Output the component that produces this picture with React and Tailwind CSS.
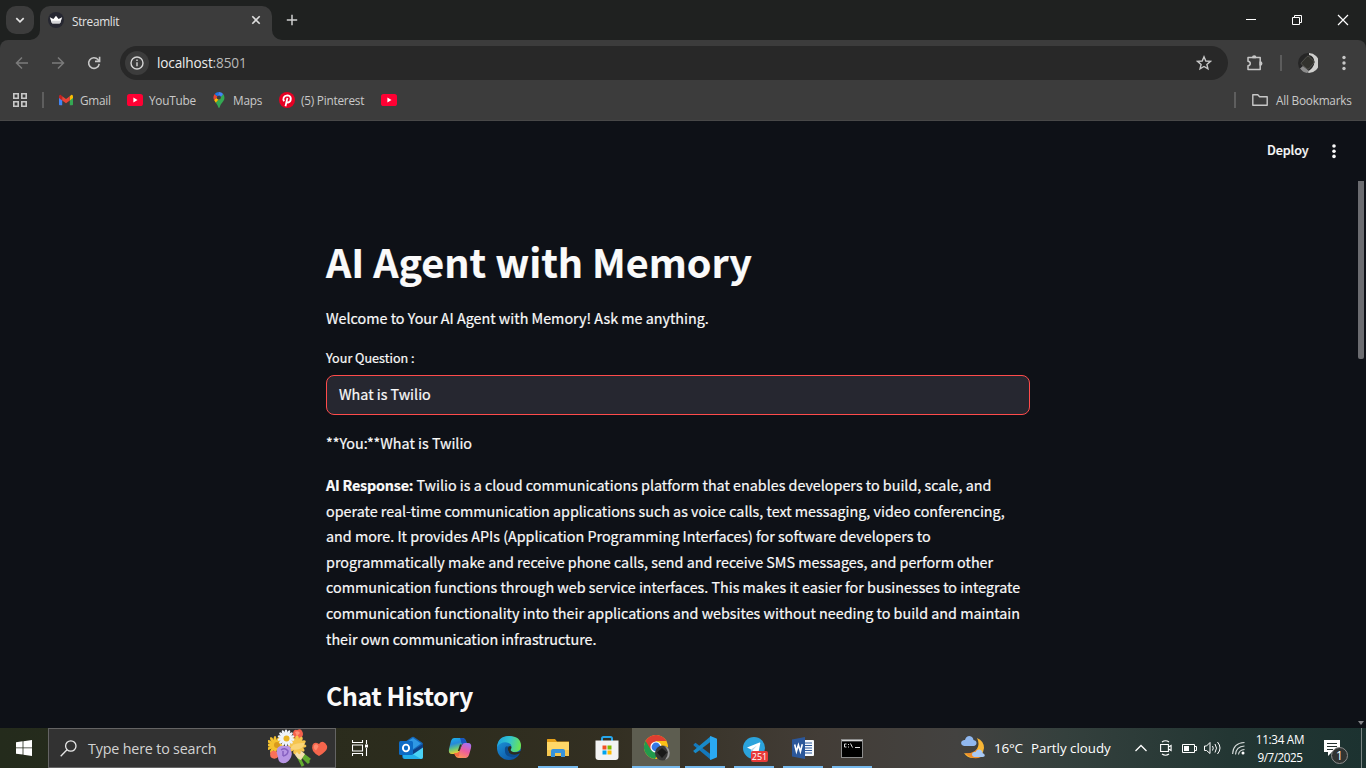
import React from "react";

const ui = "font-['Open_Sans','Noto_Sans',sans-serif]";
const page = "font-['Noto_Sans_CJK_SC','Source_Sans_Pro',sans-serif] [-webkit-text-stroke:0.2px]";

function Line({ children }) {
  return <div className="h-[25.6px] whitespace-nowrap">{children}</div>;
}

function YouTubeIcon() {
  return (
    <svg className="h-4 w-4 shrink-0" viewBox="0 0 16 16">
      <rect x="0" y="2" width="16" height="12" rx="2.6" fill="#ff0033" />
      <path d="M6.4 5.6v4.8L10.5 8z" fill="#fff" />
    </svg>
  );
}

function TabStrip() {
  return (
    <div className="flex h-10 items-start bg-[#1f2120]">
      <button className="ml-1.5 mt-1.5 flex h-7 w-7 items-center justify-center rounded-[10px] bg-[#3c3c3c]">
        <svg className="h-3 w-3" viewBox="0 0 12 12" fill="none" stroke="#e3e3e3" strokeWidth="1.7"><path d="M2.3 4.2 6 7.8l3.7-3.6" /></svg>
      </button>
      <div className="relative ml-1.5 mt-1.5 flex h-[34px] w-[232px] items-center rounded-t-[10px] bg-[#3c3c3c] pb-[6px]">
        <svg className="absolute -left-[10px] bottom-0 h-[10px] w-[10px]" viewBox="0 0 10 10"><path d="M10 0v10H0A10 10 0 0 0 10 0z" fill="#3c3c3c" /></svg>
        <svg className="absolute -right-[10px] bottom-0 h-[10px] w-[10px]" viewBox="0 0 10 10"><path d="M0 0v10h10A10 10 0 0 1 0 0z" fill="#3c3c3c" /></svg>
        <svg className="ml-2 h-4 w-4" viewBox="0 0 16 16">
          <circle cx="8" cy="8" r="8" fill="#262731" />
          <path d="M1.8 5.2 5.400 7 8 3.800 10.600 7l3.600-1.800-1.900 5.600q-.3.700-1 .7H4.700q-.7 0-1-.7z" fill="#fff" />
          <path d="M3 8.800h10l-.7 2q-.2.500-.8.500H4.700q-.6 0-.8-.500z" fill="#d5d5d8" />
        </svg>
        <span className="ml-2 w-[48px] whitespace-nowrap pt-px text-[11.8px] leading-4 tracking-[-0.3px] text-[#e3e3e3]">Streamlit</span>
        <svg className="ml-auto mr-[11px] h-[10px] w-[10px]" viewBox="0 0 10 10" stroke="#dedede" strokeWidth="1.6"><path d="m1.3 1.3 7.4 7.4M8.7 1.3 1.3 8.7" /></svg>
      </div>
      <svg className="ml-[14px] mt-[14px] h-3 w-3" viewBox="0 0 12 12" stroke="#d0d0d0" strokeWidth="1.5"><path d="M6 .8v10.4M.8 6h10.4" /></svg>
      <div className="ml-auto flex h-10 text-white">
        <span className="flex w-[46px] items-center justify-center"><svg className="h-3 w-3" viewBox="0 0 12 12" stroke="#fff"><path d="M1 5.5h10" /></svg></span>
        <span className="flex w-[46px] items-center justify-center"><svg className="h-3 w-3" viewBox="0 0 12 12" fill="none" stroke="#fff"><path d="M1.5 3.5h7v7h-7zM3.5 3.500v-2h7v7h-2" /></svg></span>
        <span className="flex w-[46px] items-center justify-center"><svg className="h-3 w-3" viewBox="0 0 12 12" stroke="#fff" strokeWidth="1.2"><path d="m1 1 10 10M11 1 1 11" /></svg></span>
      </div>
    </div>
  );
}

function Toolbar() {
  return (
    <div className="flex h-[46px] items-center rounded-t-[8px] bg-[#3c3c3c]">
      <svg className="ml-[14px] h-4 w-4" viewBox="0 0 16 16" fill="none" stroke="#7b7b7b" strokeWidth="1.5"><path d="M14 8H2.700M8 2.500 2.500 8 8 13.500" /></svg>
      <svg className="ml-5 h-4 w-4" viewBox="0 0 16 16" fill="none" stroke="#7b7b7b" strokeWidth="1.5"><path d="M2 8h11.300M8 2.500 13.500 8 8 13.500" /></svg>
      <svg className="ml-5 h-4 w-4" viewBox="0 0 16 16" fill="none" stroke="#c7c7c7" strokeWidth="1.6"><path d="M13.200 8.800A5.300 5.300 0 1 1 12 4.600l1 1.100" /><path d="M13.600 1.800v4.600H9" /></svg>
      <div className="ml-[18px] flex h-[34px] w-[1108px] items-center rounded-full bg-[#282828]">
        <span className="ml-[5px] flex h-6 w-6 items-center justify-center rounded-full bg-[#3c3c3c]">
          <svg className="h-[14px] w-[14px]" viewBox="0 0 14 14" fill="none" stroke="#d5d5d5" strokeWidth="1.4"><circle cx="7" cy="7" r="6" /><path d="M7 6.200v4.100M7 3.600v1.400" /></svg>
        </span>
        <span className="ml-2 whitespace-nowrap text-[13.6px] leading-5 tracking-[-0.15px] text-[#b9b9b9]"><span className="text-[#ececec]">localhost</span>:8501</span>
        <svg className="ml-auto mr-4 h-4 w-4" viewBox="0 0 16 16" fill="none" stroke="#c7c7c7" strokeWidth="1.4"><path d="m8 1.800 1.800 4.200 4.600.4-3.500 3 1.050 4.500L8 11.500l-3.950 2.400 1.050-4.500-3.500-3 4.600-.4z" /></svg>
      </div>
      <svg className="ml-[18px] h-[18px] w-[18px]" viewBox="0 0 18 18" fill="none" stroke="#c7c7c7" strokeWidth="1.5" strokeLinejoin="round"><path d="M2 3.500h12.200v12H2v-3.700c3-.4 3-4.200 0-4.600z" /><path d="M6.700 3.500a1.500 1.500 0 0 1 3 0zM14.200 8a1.500 1.500 0 0 1 0 3z" fill="#c7c7c7" /></svg>
      <span className="ml-4 h-4 w-[2px] bg-[#5c5c5c]" />
      <svg className="ml-4 h-5 w-5" viewBox="0 0 20 20">
        <circle cx="10" cy="10" r="10" fill="#262626" />
        <path d="M11 0A10 10 0 0 1 11 20l-2-1Q16 15 16.500 9 16 3 11 2z" fill="#cfcfcd" />
        <path d="M2 15.500 5 13l6 5-2 2q-4-.5-7-4.500z" fill="#8c8c8c" />
        <path d="M3.500 9.500 9 3.500q1-.8 2 0l4.800 4.500q.7 1 0 2L11 15.800q-1 .8-2 0l-5.500-4.600q-.6-.8 0-1.700z" fill="#32322d" stroke="#5a5a55" strokeWidth=".8" />
      </svg>
      <svg className="ml-[18px] h-4 w-4" viewBox="0 0 16 16" fill="#c7c7c7"><circle cx="8" cy="2.500" r="1.700" /><circle cx="8" cy="8" r="1.700" /><circle cx="8" cy="13.500" r="1.700" /></svg>
    </div>
  );
}

function Bookmarks() {
  return (
    <div className="flex h-[35px] items-center border-b border-[#484848] bg-[#3c3c3c] pb-[6px] text-[11.8px] leading-4 tracking-[-0.23px] text-[#c9c9c9]">
      <svg className="ml-[13px] h-[14px] w-[14px] shrink-0" viewBox="0 0 14 14" fill="none" stroke="#c7c7c7" strokeWidth="1.6"><path d="M.8.8h4.400v4.400H.8zM8.800.8h4.400v4.400H8.800zM.8 8.800h4.400v4.400H.8zM8.800 8.800h4.400v4.400H8.800z" /></svg>
      <span className="ml-[15px] h-4 w-[2px] bg-[#5e5e5e]" />
      <span className="ml-[14px] flex w-[69px] items-center gap-[6px]">
        <svg className="h-4 w-4 shrink-0" viewBox="0 0 16 16">
          <path d="M1 4.200v8.300q0 .8.800.8h2.400V6.500z" fill="#4285f4" />
          <path d="M15 4.200v8.300q0 .8-.8.800h-2.400V6.500z" fill="#34a853" />
          <path d="M11.800 4.500 13 3q2-.6 2 1.500v1.500l-3.200 2.400z" fill="#fbbc04" />
          <path d="M1 6V4.500Q1 2.400 3 3l1.200 1.500v3.900z" fill="#c5221f" />
          <path d="M4.200 4.200 8 7.100l3.800-2.900v4.200L8 11.300 4.200 8.400z" fill="#ea4335" />
        </svg>
        <span className="-mt-px">Gmail</span>
      </span>
      <span className="flex w-[84px] items-center gap-[6px]"><YouTubeIcon /><span className="-mt-px">YouTube</span></span>
      <span className="flex w-[68px] items-center gap-[6px]">
        <svg className="h-4 w-4 shrink-0" viewBox="0 0 16 16">
          <path d="M12.200 2q2.400 3.500.2 7C10.500 11.600 9.400 12.500 8.700 15.300q-.7 1.400-1.400 0Q6.600 12.800 4.800 10.700z" fill="#34a853" />
          <path d="M3.100 8q.7 1.400 1.700 2.700l5-6A2.200 2.200 0 0 1 6.400 7.100L5 5.700z" fill="#fbbc04" />
          <path d="M3.700 2a5.600 5.600 0 0 0-.6 6L6.700 4.700z" fill="#ea4335" />
          <path d="M8 0a5.600 5.600 0 0 0-4.300 2L6.500 4.500z" fill="#1a73e8" />
          <path d="M8 0Q10.500 0 12.200 2.100L9.700 5.200 6.500 4.300z" fill="#4285f4" />
          <circle cx="8" cy="5.600" r="2" fill="#3c3c3c" />
        </svg>
        <span className="-mt-px">Maps</span>
      </span>
      <span className="flex w-[102px] items-center gap-[6px]">
        <svg className="h-4 w-4 shrink-0" viewBox="0 0 16 16">
          <circle cx="8" cy="8" r="8" fill="#e60023" />
          <path d="M5.200 9.300Q3.800 7.600 4.700 5.500 5.800 3.400 8.300 3.400q3 .1 3.500 2.800.2 3.600-2.800 4.300-1.400.1-1.900-.9M8.400 5.900 6.500 14.300" fill="none" stroke="#fff" strokeWidth="1.8" />
        </svg>
        <span className="-mt-px whitespace-nowrap">(5) Pinterest</span>
      </span>
      <YouTubeIcon />
      <span className="ml-auto h-4 w-[2px] bg-[#5e5e5e]" />
      <svg className="ml-4 h-4 w-4" viewBox="0 0 16 16" fill="none" stroke="#c7c7c7" strokeWidth="1.4" strokeLinejoin="round"><path d="M.8 2.800h5l1.800 2h7.600v8.400H.8z" /></svg>
      <span className="-mt-px ml-2 w-[90px] whitespace-nowrap">All Bookmarks</span>
    </div>
  );
}

function Content() {
  return (
    <div className={"flex h-[607px] overflow-hidden bg-[#0e1117] text-[#fafafa] " + page}>
      <div className="ml-[326px] w-[704px] shrink-0 pt-[108px]">
        <h1 className="h-[66px] whitespace-nowrap text-[39.5px] font-bold leading-[64px] tracking-[-0.02px]">AI Agent with Memory</h1>
        <p className="mt-[10px] h-[26px] text-[14.34px] leading-[26px]">Welcome to Your AI Agent with Memory! Ask me anything.</p>
        <div className="mt-[16px] h-[22px] text-[12.6px] leading-[22px]">Your Question :</div>
        <div className="mt-[6px] flex h-10 items-center rounded-lg border border-[#ff4b4b] bg-[#262730] px-3 pb-[2px] text-[14.34px] leading-6">What is Twilio</div>
        <p className="mt-[15px] h-[26px] text-[14.34px] leading-[26px]">**You:**What is Twilio</p>
        <div className="mt-4 text-[14.34px] leading-[25.6px]">
          <Line><b className="tracking-[-0.2px]">AI Response:</b> Twilio is a cloud communications platform that enables developers to build, scale, and</Line>
          <Line>operate real-time communication applications such as voice calls, text messaging, video conferencing,</Line>
          <Line>and more. It provides APIs (Application Programming Interfaces) for software developers to</Line>
          <Line>programmatically make and receive phone calls, send and receive SMS messages, and perform other</Line>
          <Line>communication functions through web service interfaces. This makes it easier for businesses to integrate</Line>
          <Line>communication functionality into their applications and websites without needing to build and maintain</Line>
          <Line>their own communication infrastructure.</Line>
        </div>
        <h3 className="mt-[27px] whitespace-nowrap text-[24.9px] font-bold leading-[34px] tracking-[-0.42px] [-webkit-text-stroke:0px]">Chat History</h3>
      </div>
      <div className="ml-auto flex h-[60px] items-center">
        <span className="-mt-[2px] w-[60px] text-[12.6px] font-medium leading-5 tracking-[-0.1px]">Deploy</span>
        <svg className="h-4 w-4" viewBox="0 0 16 16" fill="#fafafa"><circle cx="7" cy="3" r="1.8" /><circle cx="7" cy="8.2" r="1.8" /><circle cx="7" cy="13.4" r="1.8" /></svg>
      </div>
      <div className="ml-[15px] flex w-2 flex-col items-start justify-between pb-[3px] pt-[60px]">
        <div className="h-[178px] w-[6px] rounded-b-[2px] bg-[#6b6c70]" />
        <svg className="h-[4px] w-[6px]" viewBox="0 0 6 4"><path d="M0 0h6L3 4z" fill="#85868a" /></svg>
      </div>
    </div>
  );
}

function TaskButton({ children, active }) {
  return (
    <div className={"flex h-10 w-12 shrink-0 flex-col items-center justify-between " + (active === "on" ? "bg-[#5d5d50]" : "")}>
      <div className="flex h-[38px] items-center justify-center pt-[2px]">{children}</div>
      <div className={"h-[2px] " + (active === "on" ? "w-12 bg-[#76b9ed]" : active ? "w-10 bg-[#76b9ed]" : "w-10")} />
    </div>
  );
}

function Petals({ cx, cy, r, rx, n, fill }) {
  return (
    <g fill={fill}>
      {Array.from({ length: n }, (_, i) => (
        <ellipse key={i} cx={cx} cy={cy - r / 2} rx={rx} ry={r / 2} transform={`rotate(${(i * 360) / n} ${cx} ${cy})`} />
      ))}
    </g>
  );
}

function Bouquet() {
  return (
    <svg className="h-[38px] w-[62px]" viewBox="0 0 62 38">
      <path d="M30 27 35 37M33 26l8 8M34 25l8 6" stroke="#62ac2e" strokeWidth="3" />
      <path d="m26 24 5-4 6 5-4 6q-4-1-7-7z" fill="#f3dfae" />
      <Petals cx={7} cy={16} r={9} rx={1.5} n={12} fill="#f5c22f" />
      <circle cx="9" cy="16" r="3" fill="#d99a1c" />
      <path d="M25 4q1-4 4-3 4-2 5 1 2 3 0 6l-4 2-5-2z" fill="#f4604c" />
      <path d="M27 3q3-2 5 1l-3 3z" fill="#ff9078" />
      <Petals cx={29} cy={16} r={9.5} rx={2} n={11} fill="#f6c54e" />
      <path d="M22 20q2-7 15-6-3 9-15 6z" fill="#fad477" />
      <Petals cx={18} cy={9} r={8.5} rx={1.5} n={14} fill="#eef3fa" />
      <circle cx="18.500" cy="9.5" r="3" fill="#e9b425" />
      <path d="M2 25q1-4 5-3 4 1 4 5-3 4-7 2-2-1-2-4z" fill="#fa7159" />
      <path d="M9 20q2-4 8-3 6-1 6 5 2 3-1 8-3 5-8 4-4-1-4-6-2-4-1-8z" fill="#b795e4" />
      <path d="M13 21q4-3 7 1 0 4-5 5M15 22v5" fill="none" stroke="#8660c0" strokeWidth="1.5" />
      <path d="M44.500 16q2-4 6.500-1 3-4 6.500-.5 3.500 4-.5 8-3 3-6 4.500-4-2-6-5-1.500-3-.5-6z" fill="#f5654c" />
      <path d="M46 16.500q3-3 4.500 1l-2.500 4q-3-2-2-5z" fill="#ff8b70" />
    </svg>
  );
}

function Taskbar() {
  return (
    <div className="flex h-10 items-center bg-[linear-gradient(90deg,#242b1c_0%,#2c2c1d_30%,#332f22_45%,#433d37_60%,#434240_70%,#34403d_78%,#233633_90%,#1c3230_100%)] text-white">
      <div className="flex w-12 items-center justify-center">
        <svg className="h-4 w-4" viewBox="0 0 16 16" fill="#fff"><path d="M0 2.300 6.600 1.300v6.200H0zM7.400 1.200 16 0v7.500H7.400zM0 8.300h6.600v6.300L0 13.700zM7.400 8.300H16V16l-8.600-1.200z" /></svg>
      </div>
      <div className="flex h-10 w-[288px] items-center border border-[#646464] bg-[#323232]">
        <svg className="ml-[11px] h-[17px] w-[17px]" viewBox="0 0 17 17" fill="none" stroke="#e8e8e8" strokeWidth="1.3"><circle cx="10.8" cy="6" r="5.2" /><path d="M7 9.800.7 16.200" /></svg>
        <span className="ml-[11px] w-[180px] whitespace-nowrap pt-px text-[14.3px] leading-5 tracking-[-0.17px] text-[#d2d2d2]">Type here to search</span>
        <Bouquet />
      </div>
      <div className="flex w-12 items-center justify-center">
        <svg className="h-4 w-4" viewBox="0 0 16 16" fill="none" stroke="#fff" strokeWidth="1.1"><path d="M.5 0v2.500h10V0M.5 5h10v6H.5zM.5 16v-2.500h10V16M14.500 0v4M14.500 8v8" /><path d="M13 4.500h3v3h-3z" fill="#fff" stroke="none" /></svg>
      </div>
      <div className="ml-[3px] flex gap-px">
        <TaskButton>
          <svg className="h-6 w-6" viewBox="0 0 24 24">
            <path d="M3 8 13 1q1-.6 2 0l8 5.500q1 .7 1 2V21q0 2-2 2H6q-3 0-3-3z" fill="#1466b8" />
            <path d="M6 7 14 2l8 5.500L13 14z" fill="#2f98e4" />
            <path d="M13 15 24 8v5l-11 7z" fill="#0e3f85" />
            <path d="M7 23 24 11.500V21q0 2-2 2z" fill="#4ad2f6" />
            <path d="M4 17h8l10 6H6q-2 0-2-2z" fill="#22aeea" />
            <rect x="0" y="5" width="14" height="14" rx="1.5" fill="#0d6bc5" />
            <ellipse cx="7" cy="12" rx="3.1" ry="3.4" fill="none" stroke="#fff" strokeWidth="1.9" />
          </svg>
        </TaskButton>
        <TaskButton>
          <svg className="h-[22px] w-6" viewBox="0 0 24 22">
            <defs>
              <linearGradient id="cpa" x1="0" y1="0" x2=".3" y2="1"><stop offset="0" stopColor="#19b7ed" /><stop offset=".4" stopColor="#2689db" /><stop offset=".7" stopColor="#69c67b" /><stop offset="1" stopColor="#f3d02f" /></linearGradient>
              <linearGradient id="cpb" x1=".7" y1="0" x2=".2" y2="1"><stop offset="0" stopColor="#aa70ef" /><stop offset=".45" stopColor="#ed5c9d" /><stop offset="1" stopColor="#ff9b50" /></linearGradient>
            </defs>
            <path d="M6 1h8q3 0 4 3l1 3h-5l-3 8q-1 2-3 2H4q-4 0-3-5l2-8q1-3 3-3z" fill="url(#cpa)" />
            <path d="M12 1h2q3 0 4 3l1 3h-4q-2 0-2-3z" fill="#1855c0" />
            <path d="M18 21h-7q-3 0-4-3l-1-2h3q2 0 3-3l2-5q1-2 3-2h3q4 0 3 5l-2 7q-1 3-3 3z" fill="url(#cpb)" />
            <path d="M13.500 7.500 11.500 14H9.800l2.200-6.500z" fill="#2c2c20" />
            <path d="M6 16h3q2 0 3-3l-1 6q-3 2-5-3z" fill="#f56d3f" />
          </svg>
        </TaskButton>
        <TaskButton>
          <svg className="h-6 w-6" viewBox="0 0 24 24">
            <defs>
              <linearGradient id="ea" x1="0" y1=".3" x2="1" y2=".5"><stop offset="0" stopColor="#1ca3df" /><stop offset=".5" stopColor="#33c5cd" /><stop offset="1" stopColor="#6be552" /></linearGradient>
              <linearGradient id="eb" x1="0" y1="0" x2=".8" y2="1"><stop offset="0" stopColor="#1e9ce0" /><stop offset="1" stopColor="#0b4f9f" /></linearGradient>
            </defs>
            <circle cx="12" cy="12" r="12" fill="url(#eb)" />
            <path d="M0 11Q1 0 12 0q12 0 12 10 0 6-7 6-5 0-3-3 2-5-4-6.500Q4 5.500 0 11z" fill="url(#ea)" />
            <path d="M8 12Q7 20 14 21q5 1 8.500-3.500Q16 20 12 16q-2-2-.5-5Q9 9 8 12z" fill="#0c4c8f" />
            <path d="M11.500 10.500q-2 5 2.500 7.500 4.500 1.500 8.500-.5l1.500-.5V15q-4 2-8 1-3.500-1-2-3 1-2-.5-3z" fill="#2c2c20" />
          </svg>
        </TaskButton>
        <TaskButton active="open">
          <svg className="h-5 w-[22px]" viewBox="0 0 22 20">
            <path d="M0 1.500Q0 1 .5 1H8l2 2.500h12V18H0z" fill="#e4a019" /><path d="M0 4h21.500q.5 0 .5.500V18H0z" fill="#ffd867" /><path d="M0 12h22v6H0z" fill="#f4c650" />
            <path d="M4 19v-6q0-2 2-2h10q2 0 2 2v6h-4v-4H8v4z" fill="#3793db" />
          </svg>
        </TaskButton>
        <TaskButton>
          <svg className="h-6 w-6" viewBox="0 0 24 24">
            <path d="M7 5V2.500Q7 1 8.500 1h7Q17 1 17 2.500V5" fill="none" stroke="#27a6eb" strokeWidth="2" />
            <path d="M.5 4.500h23V21q0 3-3 3h-17q-3 0-3-3z" fill="#f3f3f3" />
            <path d="M7.500 9.500h4v4h-4z" fill="#f25022" /><path d="M12.500 9.500h4v4h-4z" fill="#7fba00" /><path d="M7.500 14.500h4v4h-4z" fill="#00a4ef" /><path d="M12.500 14.500h4v4h-4z" fill="#ffb900" />
          </svg>
        </TaskButton>
        <TaskButton active="on">
          <svg className="ml-[2px] h-[26px] w-[26px]" viewBox="0 0 26 26">
            <circle cx="12" cy="12" r="12" fill="#fbc116" />
            <path d="M12 12 1.700 5.800A12 12 0 0 0 11 24l5-9z" fill="#229a4c" />
            <path d="M1.600 6A12 12 0 0 1 22.400 6H12L7 15z" fill="#df3e31" />
            <circle cx="12" cy="12" r="5.6" fill="#fff" /><circle cx="12" cy="12" r="4.4" fill="#3478e5" />
            <circle cx="18.5" cy="18" r="7.5" fill="#383838" /><path d="M20 10.700A7.500 7.500 0 0 1 21 25q3-4 3-8-1-4-4-6.300z" fill="#999" /><path d="m13 17.500 5-4.500 5 4.500-5 5.500z" fill="#191919" />
          </svg>
        </TaskButton>
        <TaskButton active="open">
          <svg className="h-6 w-6" viewBox="0 0 24 24">
            <path d="M.5 8.500 2.500 6.700 18 18.500V24L.7 9.500z" fill="#1479bc" /><path d="m.5 15.500 2 1.800L18 5.500V0L.7 14.500z" fill="#188ac9" /><path d="m17.500 0 6 2.500q.5.200.5.800v17.400q0 .6-.5.800l-6 2.500q-.5-.5-.5-1V1q0-.6.500-1z" fill="#2aa9f2" />
          </svg>
        </TaskButton>
        <TaskButton active="open">
          <span className="relative block h-[22px] w-[22px]">
            <svg className="h-[22px] w-[22px]" viewBox="0 0 22 22"><circle cx="11" cy="11" r="11" fill="#2ba3dc" /><path d="m4 10.500 12.500-5q1-.3.800.8l-2 10q-.3 1-1.300.4L8 12.500z" fill="#fff" /><path d="m8 12.500 6-4-4.500 5-.5 3z" fill="#b9d8e9" /></svg>
            <span className="absolute left-[8px] top-[14px] flex h-[11px] w-[17px] items-center justify-center rounded-[2px] bg-[#e83a38] text-[9px] leading-none">251</span>
          </span>
        </TaskButton>
        <TaskButton active="open">
          <svg className="h-[22px] w-[22px]" viewBox="0 0 22 22">
            <path d="M12 3h9q1 0 1 1v14q0 1-1 1h-9z" fill="#f5f8fc" /><path d="M13 6h7M13 8.500h7M13 11h7M13 13.500h7M13 16h7" stroke="#2b579a" strokeWidth="1.2" /><path d="M0 2.500 13 0v22L0 19.500z" fill="#2b579a" /><path d="m2.700 7.500 1.700 7 2-6.500 2 6.500L10.300 7.300" fill="none" stroke="#fff" strokeWidth="1.6" />
          </svg>
        </TaskButton>
        <TaskButton active="open">
          <svg className="h-[19px] w-[22px]" viewBox="0 0 22 19"><path d="M0 0h22v19H0z" fill="#8d8d8d" /><path d="M1 2.500h20V18H1z" fill="#000" /><path d="M1 1h20v1H1z" fill="#d7d7d7" /><path d="M5.500 5H3.500v3h2M7.500 5v1M7.500 7.500v1M9.500 4.500l2 4M14 8.500h5" fill="none" stroke="#ddd" /></svg>
        </TaskButton>
      </div>
      <div className="ml-auto flex h-10 items-center">
        <svg className="h-6 w-6" viewBox="0 0 24 24">
          <path d="M16 2q7 3 7 10-1 10-11 10-6 0-9-5 9 2 13-4 3-5 0-11z" fill="#f8b635" /><path d="M4 17q8 1 12-4l4 8q-8 4-16-4z" fill="#ef8d2a" />
          <path d="M3 10Q-1 9 .5 5.500 2 3.500 4 4q1-4 4.500-4Q12 .500 12.500 4q3 .5 3 3t-3 3z" fill="#90b8f0" /><path d="M13 21q-3-1-1.500-4 1-1.500 3-1 1-3 4-2.500 3 .500 3 3.500 3 1 2 3.200-.7.800-2 .8z" fill="#a8c9f5" />
        </svg>
        <span className="ml-[9px] w-[37px] whitespace-nowrap pt-px text-[13.5px] tracking-[-0.2px]">16°C</span>
        <span className="w-[103px] whitespace-nowrap pt-px text-[13.3px]">Partly cloudy</span>
        <svg className="h-3 w-[14px]" viewBox="0 0 14 12" fill="none" stroke="#fff" strokeWidth="1.3"><path d="m1.500 9 5.500-5.500L12.500 9" /></svg>
        <svg className="ml-3 h-4 w-3" viewBox="0 0 12 16" fill="none" stroke="#fff" strokeWidth="1.1"><path d="M.6 4.500h7.800v7H.6zM8.500 7l2.600-1.500v5L8.500 9M2 2Q5.500-.5 9 2M2 14q3.500 2.500 7 0" /></svg>
        <svg className="ml-[10px] h-4 w-[15px]" viewBox="0 0 15 16" fill="none" stroke="#fff"><path d="M.5 4.500h12v8H.5zM12.500 6.500h2v4h-2" /><path d="M2 6h5v5H2z" fill="#fff" stroke="none" /></svg>
        <svg className="ml-[7px] h-4 w-[17px]" viewBox="0 0 17 16" fill="none" stroke="#fff"><path d="M.5 6v4.500h2l3.500 3v-11l-3.500 3.500zM8.500 6q1.500 2 0 4.500M11 4q3 4 0 8.500M13.500 2q5 6 0 12" /></svg>
        <svg className="ml-[11px] h-[14px] w-[13px]" viewBox="0 0 13 14" fill="none" stroke="#d8dddc" strokeWidth="1.1"><path d="M.6 13Q1 2 12.500 1.500M3.500 13.500Q4 5.500 12.500 5M6.500 13.500Q7 9 12.500 8.500" /><circle cx="11" cy="12" r="1.5" fill="#fff" stroke="none" /></svg>
        <div className="-mt-px ml-[10px] flex w-[50px] flex-col items-center whitespace-nowrap text-[11.7px] leading-[18px]"><span className="tracking-[-0.3px]">11:34 AM</span><span className="tracking-[-0.45px]">9/7/2025</span></div>
        <span className="relative ml-[19px] mr-3 block h-6 w-[25px]">
          <svg className="mt-1 h-[16px] w-[16px]" viewBox="1 1 16 16"><path d="M1 1h16v12H9l-4 4v-4H1z" fill="#fff" /><path d="M4 4.500h10M4 7.500h10M4 10.500h6" stroke="#25312f" /></svg>
          <span className="absolute left-[7px] top-[11px] flex h-[17px] w-[17px] items-center justify-center rounded-full border border-[#8d8d8d] bg-[#303432] text-[12px] leading-none">1</span>
        </span>
        <span className="mr-1 h-10 w-px bg-[#7a8584]" />
      </div>
    </div>
  );
}

export default function App() {
  return (
    <div className={"flex h-[768px] w-[1366px] flex-col overflow-hidden bg-[#1f2120] " + ui}>
      <TabStrip />
      <Toolbar />
      <Bookmarks />
      <Content />
      <Taskbar />
    </div>
  );
}
